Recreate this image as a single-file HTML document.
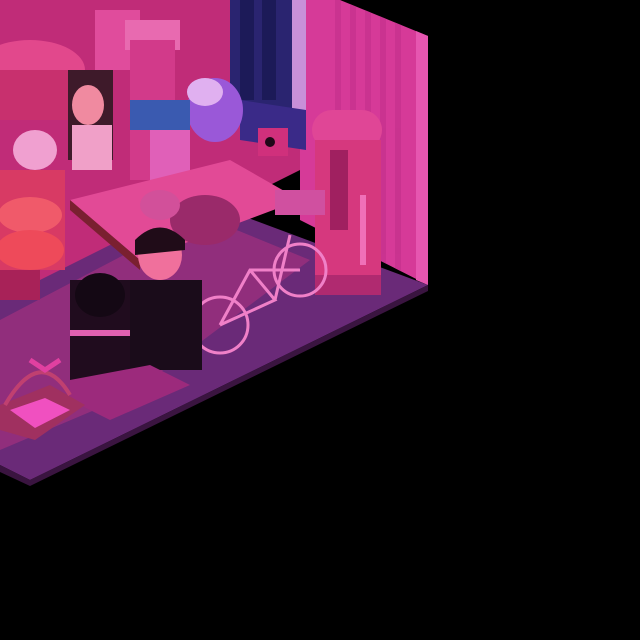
<!DOCTYPE html><html><head><style>html,body{margin:0;padding:0;background:#000;width:640px;height:640px;overflow:hidden}</style></head><body>
<svg width="640" height="640" viewBox="0 0 640 640" xmlns="http://www.w3.org/2000/svg">
<defs><clipPath id="rw"><polygon points="300,0 340,0 428,36 428,285 300,220"/></clipPath></defs>
<rect width="640" height="640" fill="#000"/>
<polygon points="0,0 300,0 300,170 0,320" fill="#c02c78"/>
<polygon points="300,0 340,0 428,36 428,285 300,220" fill="#d63a98"/>
<g fill="#c2308a" opacity="0.6" clip-path="url(#rw)">
<rect x="335" y="0" width="6" height="300"/><rect x="350" y="0" width="6" height="300"/><rect x="365" y="0" width="6" height="300"/><rect x="380" y="0" width="6" height="300"/><rect x="395" y="0" width="6" height="300"/></g>
<polygon points="416,31 428,36 428,285 416,280" fill="#e656b0"/>
<!-- floor -->
<polygon points="0,300 200,200 428,285 30,480 0,465" fill="#6a2a78"/>
<polygon points="0,320 200,215 310,260 130,395 0,450" fill="#a2307e" opacity="0.7"/>
<polygon points="0,465 30,480 428,285 428,291 30,486 0,472" fill="#3a1440"/>
<!-- door -->
<rect x="230" y="0" width="62" height="110" fill="#2a2470"/>
<rect x="240" y="0" width="14" height="100" fill="#1c1a58"/><rect x="262" y="0" width="14" height="100" fill="#1c1a58"/>
<rect x="292" y="0" width="14" height="130" fill="#c890d8"/>
<polygon points="240,100 306,110 306,150 240,140" fill="#3a2a88"/>
<!-- left lamp/table -->
<ellipse cx="30" cy="70" rx="55" ry="30" fill="#e2488c"/>
<rect x="0" y="70" width="70" height="50" fill="#c8306e"/>
<rect x="0" y="170" width="65" height="100" fill="#d83a64"/>
<ellipse cx="30" cy="215" rx="32" ry="18" fill="#f05a6a"/>
<ellipse cx="30" cy="250" rx="34" ry="20" fill="#ee4a5a"/>
<rect x="0" y="270" width="40" height="30" fill="#a82258"/>
<ellipse cx="35" cy="150" rx="22" ry="20" fill="#f0a0d0"/>
<rect x="95" y="10" width="45" height="60" fill="#e04c9c"/>
<rect x="125" y="20" width="55" height="30" fill="#e86ab0"/>
<rect x="130" y="40" width="45" height="140" fill="#d23a8a"/>
<!-- girl -->
<rect x="68" y="70" width="45" height="90" fill="#3e1a2a"/>
<ellipse cx="88" cy="105" rx="16" ry="20" fill="#f08aa0"/>
<rect x="72" y="125" width="40" height="45" fill="#f0a0c8"/>
<ellipse cx="215" cy="110" rx="28" ry="32" fill="#9a58d8"/>
<ellipse cx="205" cy="92" rx="18" ry="14" fill="#e0b0f0"/>
<rect x="130" y="100" width="60" height="30" fill="#3a5ab0"/>
<rect x="150" y="130" width="40" height="70" fill="#e060b8"/>
<polygon points="70,200 230,160 300,200 140,260" fill="#e24a96"/>
<polygon points="70,200 140,260 140,270 70,210" fill="#7a2030"/>
<rect x="258" y="128" width="30" height="28" fill="#d0307c"/><circle cx="270" cy="142" r="5" fill="#200818"/>
<rect x="312" y="110" width="70" height="40" rx="20" fill="#e04696"/>
<rect x="315" y="140" width="66" height="145" fill="#d6387e"/>
<rect x="330" y="150" width="18" height="80" fill="#a02060"/>
<rect x="360" y="195" width="6" height="70" fill="#f070b8"/>
<rect x="315" y="275" width="66" height="20" fill="#b02a70"/>
<ellipse cx="205" cy="220" rx="35" ry="25" fill="#9a2a6a"/>
<ellipse cx="160" cy="205" rx="20" ry="15" fill="#d2509a"/>
<g stroke="#f080c8" stroke-width="3" fill="none">
<circle cx="220" cy="325" r="28"/><circle cx="300" cy="270" r="26"/>
<path d="M220 325 L250 270 L300 270 M250 270 L275 300 L220 325 M275 300 L290 235"/></g>
<rect x="275" y="190" width="50" height="25" fill="#d050a0"/>
<rect x="130" y="280" width="72" height="90" fill="#1a0c1a"/>
<ellipse cx="160" cy="255" rx="22" ry="25" fill="#f0709c"/>
<path d="M135 240 Q160 215 185 240 L185 250 L135 255Z" fill="#200c18"/>
<rect x="70" y="280" width="60" height="110" fill="#200c1e"/>
<ellipse cx="100" cy="295" rx="25" ry="22" fill="#140814"/>
<rect x="70" y="330" width="60" height="6" fill="#e060b0"/>
<polygon points="70,380 150,365 190,385 110,420 70,400" fill="#9c2a7c"/>
<polygon points="0,405 50,385 85,405 35,440 0,430" fill="#a03060"/>
<polygon points="10,410 45,398 70,410 35,428" fill="#f050c0"/>
<path d="M5,405 Q40,345 70,395" stroke="#c04070" stroke-width="4" fill="none"/>
<path d="M30,360 l15,10 l15,-10" stroke="#e040a0" stroke-width="5" fill="none"/>
</svg>
</body></html>
